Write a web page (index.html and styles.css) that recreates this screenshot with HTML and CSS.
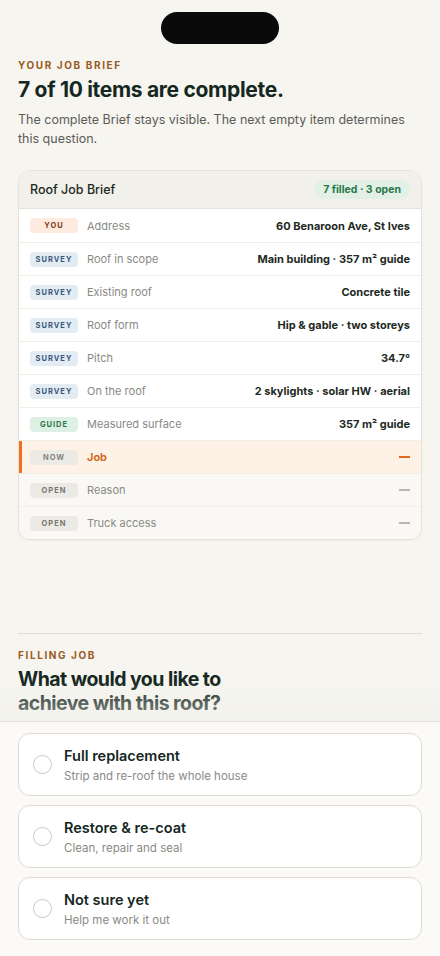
FILE: index.html
```html
<!DOCTYPE html>
<html lang="en">
  <head>
    <meta charset="UTF-8" />
    <meta name="viewport" content="width=device-width, initial-scale=1.0" />
    <title>Roof Job Brief</title>
    <link rel="stylesheet" href="styles.css">
  </head>
  <body>
    <div class="notch"></div>

    <main class="page">
      <div class="eyebrow">Your Job Brief</div>
      <h1>7 of 10 items are complete.</h1>
      <p class="intro">
        The complete Brief stays visible. The next empty item determines
        this question.
      </p>

      <div class="brief">
        <div class="brief-header">
          <div class="brief-title">Roof Job Brief</div>
          <div class="brief-count">7 filled · 3 open</div>
        </div>

        <div class="brief-row">
          <span class="tag tag-you">You</span>
          <span class="row-label">Address</span>
          <span class="row-value">60 Benaroon Ave, St Ives</span>
        </div>
        <div class="brief-row">
          <span class="tag tag-survey">Survey</span>
          <span class="row-label">Roof in scope</span>
          <span class="row-value">Main building · 357 m² guide</span>
        </div>
        <div class="brief-row">
          <span class="tag tag-survey">Survey</span>
          <span class="row-label">Existing roof</span>
          <span class="row-value">Concrete tile</span>
        </div>
        <div class="brief-row">
          <span class="tag tag-survey">Survey</span>
          <span class="row-label">Roof form</span>
          <span class="row-value">Hip &amp; gable · two storeys</span>
        </div>
        <div class="brief-row">
          <span class="tag tag-survey">Survey</span>
          <span class="row-label">Pitch</span>
          <span class="row-value">34.7°</span>
        </div>
        <div class="brief-row">
          <span class="tag tag-survey">Survey</span>
          <span class="row-label">On the roof</span>
          <span class="row-value">2 skylights · solar HW · aerial</span>
        </div>
        <div class="brief-row">
          <span class="tag tag-guide">Guide</span>
          <span class="row-label">Measured surface</span>
          <span class="row-value">357 m² guide</span>
        </div>
        <div class="brief-row row-now">
          <span class="tag tag-open">Now</span>
          <span class="row-label">Job</span>
          <span class="row-dash"></span>
        </div>
        <div class="brief-row row-open">
          <span class="tag tag-open">Open</span>
          <span class="row-label">Reason</span>
          <span class="row-dash"></span>
        </div>
        <div class="brief-row row-open">
          <span class="tag tag-open">Open</span>
          <span class="row-label">Truck access</span>
          <span class="row-dash"></span>
        </div>
      </div>

      <div class="question">
        <div class="eyebrow">Filling Job</div>
        <h2>What would you like to<br />achieve with this roof?</h2>
      </div>
    </main>

    <div class="sheet">
      <button class="option">
        <span class="radio"></span>
        <span class="option-text">
          <span class="option-title">Full replacement</span>
          <span class="option-sub">Strip and re-roof the whole house</span>
        </span>
      </button>
      <button class="option">
        <span class="radio"></span>
        <span class="option-text">
          <span class="option-title">Restore &amp; re-coat</span>
          <span class="option-sub">Clean, repair and seal</span>
        </span>
      </button>
      <button class="option">
        <span class="radio"></span>
        <span class="option-text">
          <span class="option-title">Not sure yet</span>
          <span class="option-sub">Help me work it out</span>
        </span>
      </button>
    </div>
  </body>
</html>
```

FILE: styles.css
```css
:root {
  --bg: #f6f5f0;
  --ink: #15271e;
  --muted: #5c5c58;
  --brown: #9a5a24;
  --line: #e4e2da;
  --row-line: #efeee8;
  --orange: #f07021;
  --font: Inter, "Open Sans", sans-serif;
}

* {
  margin: 0;
  padding: 0;
  box-sizing: border-box;
}

body {
  font-family: var(--font);
  color: var(--ink);
  background-color: var(--bg);
  height: 956px;
  overflow: hidden;
}

.notch {
  width: 118px;
  height: 32px;
  margin: 12px auto 0;
  background-color: #0a0a0a;
  border-radius: 16px;
}

.page {
  padding: 14px 18px 0;
}

.eyebrow {
  font-size: 10px;
  font-weight: 700;
  letter-spacing: 1.6px;
  text-transform: uppercase;
  color: var(--brown);
  line-height: 14px;
}

h1 {
  margin-top: 5px;
  font-size: 21px;
  font-weight: 700;
  letter-spacing: -0.3px;
  line-height: 26px;
  color: var(--ink);
}

.intro {
  margin-top: 7px;
  font-size: 12.5px;
  line-height: 19px;
  color: var(--muted);
}

.brief {
  margin-top: 22px;
  background-color: white;
  border: 1px solid var(--line);
  border-radius: 12px;
  overflow: hidden;
  box-shadow: 0 1px 2px rgba(0, 0, 0, 0.04);
}

.brief-header {
  display: flex;
  align-items: center;
  justify-content: space-between;
  height: 38px;
  padding: 0 11px;
  background-color: #f1f0ea;
  border-bottom: 1px solid var(--line);
}

.brief-title {
  font-size: 12.5px;
  font-weight: 500;
  color: #1c2a22;
}

.brief-count {
  padding: 3px 9px;
  border-radius: 10px;
  background-color: #e2f0e5;
  color: #2a7849;
  font-size: 10.5px;
  font-weight: 700;
}

.brief-row {
  display: flex;
  align-items: center;
  height: 33px;
  padding: 0 11px;
  border-top: 1px solid var(--row-line);
}

.brief-header + .brief-row {
  border-top: none;
}

.tag {
  width: 48px;
  height: 15px;
  border-radius: 4px;
  font-size: 7.5px;
  font-weight: 700;
  letter-spacing: 1px;
  text-transform: uppercase;
  display: flex;
  align-items: center;
  justify-content: center;
  flex-shrink: 0;
}

.tag-you {
  background-color: #fdebdf;
  color: #7f3a17;
}

.tag-survey {
  background-color: #e3ebf3;
  color: #37567a;
}

.tag-guide {
  background-color: #ddf0e4;
  color: #2c7449;
}

.tag-open {
  background-color: #ebeae4;
  color: #77766f;
}

.row-label {
  margin-left: 9px;
  font-size: 11px;
  color: #8a8a85;
  flex: 1;
}

.row-value {
  font-size: 11px;
  font-weight: 700;
  color: #1d2a23;
}

.row-dash {
  width: 11px;
  height: 2px;
  background-color: #b8b6ae;
}

.row-now {
  background-color: #fdf2e5;
  box-shadow: inset 3px 0 0 var(--orange);
}

.row-now .row-label {
  color: #d2600f;
  font-weight: 600;
}

.row-now .tag-open {
  color: #86847d;
}

.row-now .row-dash {
  background-color: #e06a1f;
}

.row-open {
  background-color: #f9f8f4;
}

.question {
  margin-top: 93px;
  padding-top: 14px;
  border-top: 1px solid #dcdad3;
}

h2 {
  margin-top: 5px;
  font-size: 19.5px;
  font-weight: 700;
  letter-spacing: -0.55px;
  line-height: 24px;
  color: var(--ink);
}

.sheet {
  position: fixed;
  left: 0;
  right: 0;
  bottom: 0;
  top: 721px;
  padding: 11px 18px 16px;
  background-color: #fbfaf8;
  border-top: 1px solid #e3e1da;
  display: flex;
  flex-direction: column;
  gap: 9px;
}

.sheet::before {
  content: "";
  position: absolute;
  left: 0;
  right: 0;
  top: -41px;
  height: 40px;
  background: linear-gradient(rgba(246, 245, 240, 0), rgba(240, 239, 234, 0.55));
  pointer-events: none;
}

.option {
  display: flex;
  align-items: center;
  height: 63px;
  padding: 0 14px;
  background-color: white;
  border: 1px solid #dedbd3;
  border-radius: 12px;
  font-family: var(--font);
  text-align: left;
  cursor: pointer;
}

.radio {
  width: 19px;
  height: 19px;
  border: 1px solid #ccc9c0;
  border-radius: 50%;
  flex-shrink: 0;
}

.option-text {
  margin-left: 12px;
  display: flex;
  flex-direction: column;
}

.option-title {
  font-size: 14.5px;
  font-weight: 600;
  color: var(--ink);
  line-height: 20px;
}

.option-sub {
  margin-top: 2px;
  font-size: 11.5px;
  color: #8a8a85;
  line-height: 16px;
}
```
